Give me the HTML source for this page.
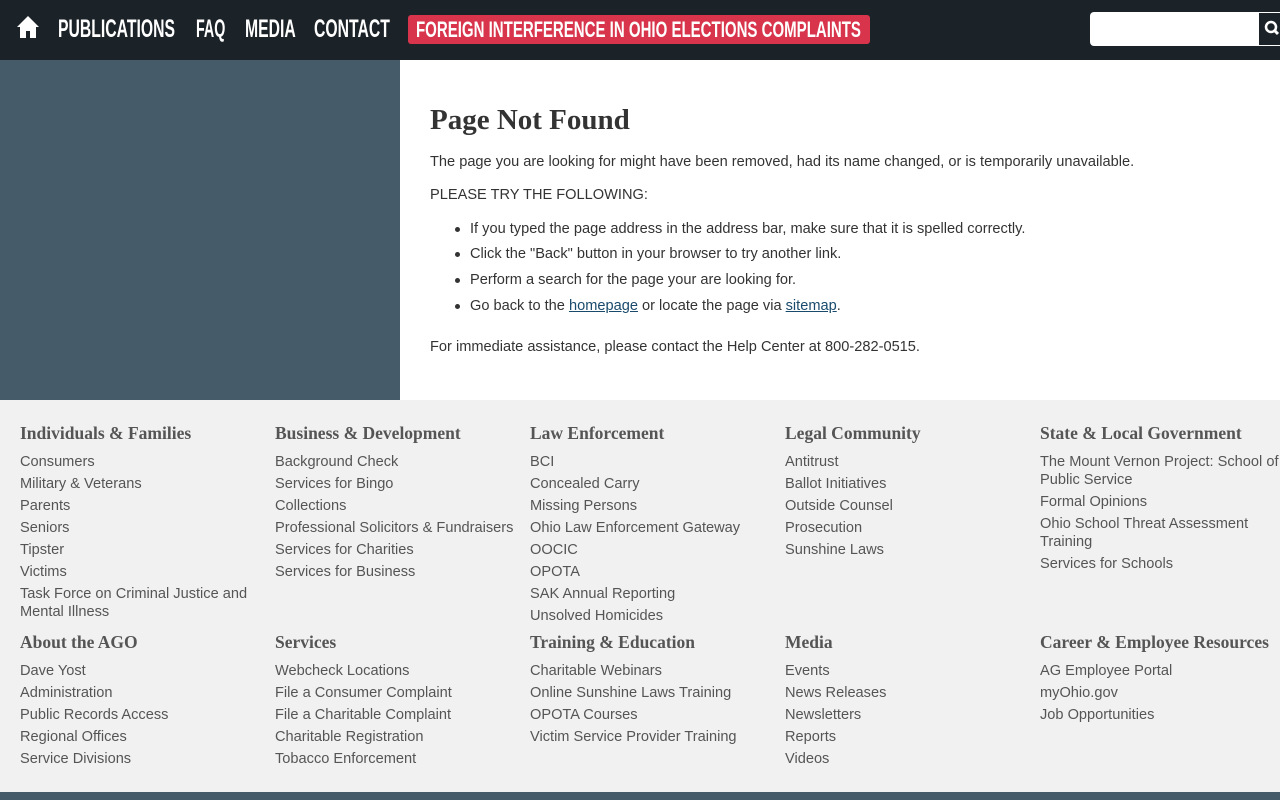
<!DOCTYPE html>
<html><head><meta charset="utf-8"><style>
*{margin:0;padding:0;box-sizing:border-box}
body{width:1280px;height:800px;position:relative;overflow:hidden;background:#f2f1f1;font-family:"Liberation Sans",sans-serif;color:#555}
.top{position:absolute;left:0;top:0;width:1280px;height:60px;background:#1c2328}
.nv{position:absolute;top:14px;color:#fff;font-weight:bold;font-size:25px;line-height:30px;transform:scaleX(.63);transform-origin:left;white-space:nowrap}
.badge{position:absolute;left:408px;top:15px;width:462px;height:29px;background:#d8344b;border-radius:3px}
.badge span{position:absolute;left:8px;top:1px;color:#fff;font-weight:bold;font-size:22px;line-height:27px;transform:scaleX(.683);transform-origin:left;white-space:nowrap}
.search{position:absolute;left:1090px;top:12px;width:170px;height:34px;background:#fff;border-radius:4px 0 0 4px}
.sbtn{position:absolute;left:1258px;top:12px;width:22px;height:34px;background:#1c2328;border:1px solid #fff;border-right:none}
.left{position:absolute;left:0;top:60px;width:400px;height:340px;background:#465b69}
.main{position:absolute;left:400px;top:60px;width:880px;height:340px;background:#fff}
h1{position:absolute;left:430px;top:104px;font-family:"Liberation Serif","DejaVu Serif",serif;font-size:29px;color:#333;font-weight:bold}
.p{position:absolute;left:430px;font-size:14.6px;color:#333;white-space:nowrap}
.p a{color:#1a4a6b;text-decoration:underline}
.dot{position:absolute;left:455px;width:5px;height:5px;border-radius:50%;background:#333}
.col{position:absolute;width:250px}
.col h3{font-family:"Liberation Serif",serif;font-size:17.5px;font-weight:bold;color:#555;height:30px;line-height:20px}
.col div{font-size:14.6px;line-height:18px;margin-bottom:4px;color:#555}
.bot{position:absolute;left:0;top:792px;width:1280px;height:8px;background:#465b69}
</style></head><body>
<div class="top">
<svg style="position:absolute;left:16px;top:15px" width="24" height="24" viewBox="0 0 24 24"><path d="M12 1 L1 12 L4 12 L4 23 L10 23 L10 16 L14 16 L14 23 L20 23 L20 12 L23 12 Z" fill="#fff"/></svg>
<span class="nv" style="left:58px">PUBLICATIONS</span>
<span class="nv" style="left:196px;transform:scaleX(.57)">FAQ</span>
<span class="nv" style="left:245px">MEDIA</span>
<span class="nv" style="left:314px">CONTACT</span>
<div class="badge"><span>FOREIGN INTERFERENCE IN OHIO ELECTIONS COMPLAINTS</span></div>
<div class="search"></div>
<div class="sbtn"><svg width="20" height="32" viewBox="0 0 20 32"><circle cx="12" cy="14" r="5" stroke="#fff" stroke-width="2.5" fill="none"/><path d="M15.5 17.5 L19 21" stroke="#fff" stroke-width="3"/></svg></div>
</div>
<div class="left"></div>
<div class="main"></div>
<h1>Page Not Found</h1>
<div class="p" style="top:154px">The page you are looking for might have been removed, had its name changed, or is temporarily unavailable.</div>
<div class="p" style="top:187px">PLEASE TRY THE FOLLOWING:</div>
<div class="dot" style="top:227px"></div><div class="p" style="left:470px;top:221px">If you typed the page address in the address bar, make sure that it is spelled correctly.</div>
<div class="dot" style="top:252px"></div><div class="p" style="left:470px;top:246px">Click the "Back" button in your browser to try another link.</div>
<div class="dot" style="top:278px"></div><div class="p" style="left:470px;top:272px">Perform a search for the page your are looking for.</div>
<div class="dot" style="top:304px"></div><div class="p" style="left:470px;top:298px">Go back to the <a>homepage</a> or locate the page via <a>sitemap</a>.</div>
<div class="p" style="top:339px">For immediate assistance, please contact the Help Center at 800-282-0515.</div>

<div class="col" style="left:20px;top:423px"><h3>Individuals &amp; Families</h3><div>Consumers</div><div>Military &amp; Veterans</div><div>Parents</div><div>Seniors</div><div>Tipster</div><div>Victims</div><div>Task Force on Criminal Justice and Mental Illness</div></div>
<div class="col" style="left:275px;top:423px"><h3>Business &amp; Development</h3><div>Background Check</div><div>Services for Bingo</div><div>Collections</div><div style="white-space:nowrap">Professional Solicitors &amp; Fundraisers</div><div>Services for Charities</div><div>Services for Business</div></div>
<div class="col" style="left:530px;top:423px"><h3>Law Enforcement</h3><div>BCI</div><div>Concealed Carry</div><div>Missing Persons</div><div>Ohio Law Enforcement Gateway</div><div>OOCIC</div><div>OPOTA</div><div>SAK Annual Reporting</div><div>Unsolved Homicides</div></div>
<div class="col" style="left:785px;top:423px"><h3>Legal Community</h3><div>Antitrust</div><div>Ballot Initiatives</div><div>Outside Counsel</div><div>Prosecution</div><div>Sunshine Laws</div></div>
<div class="col" style="left:1040px;top:423px;width:240px;overflow:hidden"><h3 style="white-space:nowrap">State &amp; Local Government</h3><div style="width:260px">The Mount Vernon Project: School of Public Service</div><div>Formal Opinions</div><div>Ohio School Threat Assessment Training</div><div>Services for Schools</div></div>

<div class="col" style="left:20px;top:632px"><h3>About the AGO</h3><div>Dave Yost</div><div>Administration</div><div>Public Records Access</div><div>Regional Offices</div><div>Service Divisions</div></div>
<div class="col" style="left:275px;top:632px"><h3>Services</h3><div>Webcheck Locations</div><div>File a Consumer Complaint</div><div>File a Charitable Complaint</div><div>Charitable Registration</div><div>Tobacco Enforcement</div></div>
<div class="col" style="left:530px;top:632px"><h3>Training &amp; Education</h3><div>Charitable Webinars</div><div>Online Sunshine Laws Training</div><div>OPOTA Courses</div><div>Victim Service Provider Training</div></div>
<div class="col" style="left:785px;top:632px"><h3>Media</h3><div>Events</div><div>News Releases</div><div>Newsletters</div><div>Reports</div><div>Videos</div></div>
<div class="col" style="left:1040px;top:632px;width:240px"><h3 style="white-space:nowrap">Career &amp; Employee Resources</h3><div>AG Employee Portal</div><div>myOhio.gov</div><div>Job Opportunities</div></div>
<div class="bot"></div>
</body></html>
